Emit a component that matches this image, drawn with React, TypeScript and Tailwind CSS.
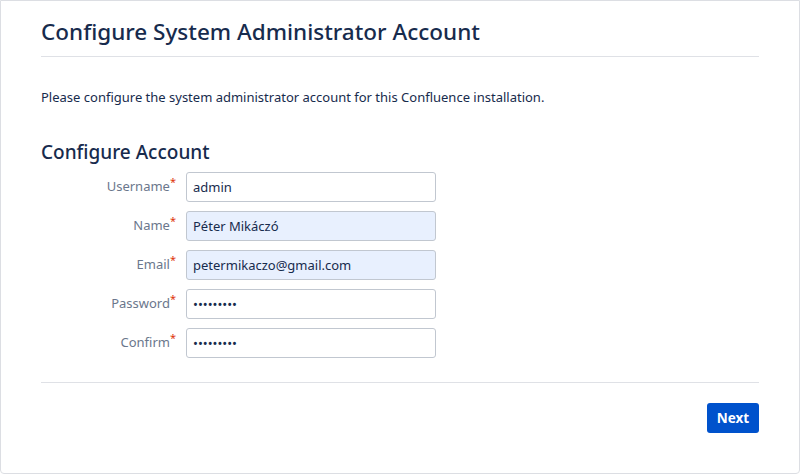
import { useState } from 'react'

const fields = [
  { label: 'Username', value: 'admin', type: 'text', autofill: false },
  { label: 'Name', value: 'Péter Mikáczó', type: 'text', autofill: true },
  { label: 'Email', value: 'petermikaczo@gmail.com', type: 'text', autofill: true },
  { label: 'Password', value: 'secret123', type: 'password', autofill: false },
  { label: 'Confirm', value: 'secret123', type: 'password', autofill: false },
]

const App = () => {
  const [values, setValues] = useState(fields.map((f) => f.value))

  return (
    <div className="h-[474px] w-[800px] bg-white font-['Noto_Sans','Open_Sans',sans-serif] text-[#172b4d]">
      <div className="h-full w-full rounded-b border border-[#dcdee3] px-10 pt-[15px]">
        <h1 className="border-b border-[#dfe1e6] pb-[9px] text-[22.5px] font-medium leading-[31px] text-[#172b4d]">
          Configure System Administrator Account
        </h1>

        <p className="mt-[30px] text-[13px] leading-5">
          Please configure the system administrator account for this Confluence installation.
        </p>

        <h2 className="mt-[33px] text-[19px] font-medium leading-6">Configure Account</h2>

        <form className="mt-[8px] flex flex-col gap-[9px]">
          {fields.map((f, i) => (
            <div key={f.label} className="flex items-center">
              <label className="w-[145px] pr-[10px] text-right text-[13px] text-[#6b778c]">
                {f.label}
                <span className="relative -top-[5px] text-[11px] text-[#de350b]">*</span>
              </label>
              <input
                type={f.type}
                value={values[i]}
                onChange={(e) => setValues(values.map((v, j) => (j === i ? e.target.value : v)))}
                className={`h-[30px] w-[250px] rounded-[3px] border border-[#c1c7d0] px-[6px] text-[13px] text-[#172b4d] outline-none ${
                  f.autofill ? 'bg-[#e8f0fe]' : 'bg-white'
                }`}
              />
            </div>
          ))}
        </form>

        <div className="mt-[24px] border-t border-[#dfe1e6] pt-5">
          <div className="flex justify-end">
            <button className="h-[30px] w-[52px] rounded-[3px] bg-[#0052cc] text-[13.5px] font-bold text-white">
              Next
            </button>
          </div>
        </div>
      </div>
    </div>
  )
}

export default App
